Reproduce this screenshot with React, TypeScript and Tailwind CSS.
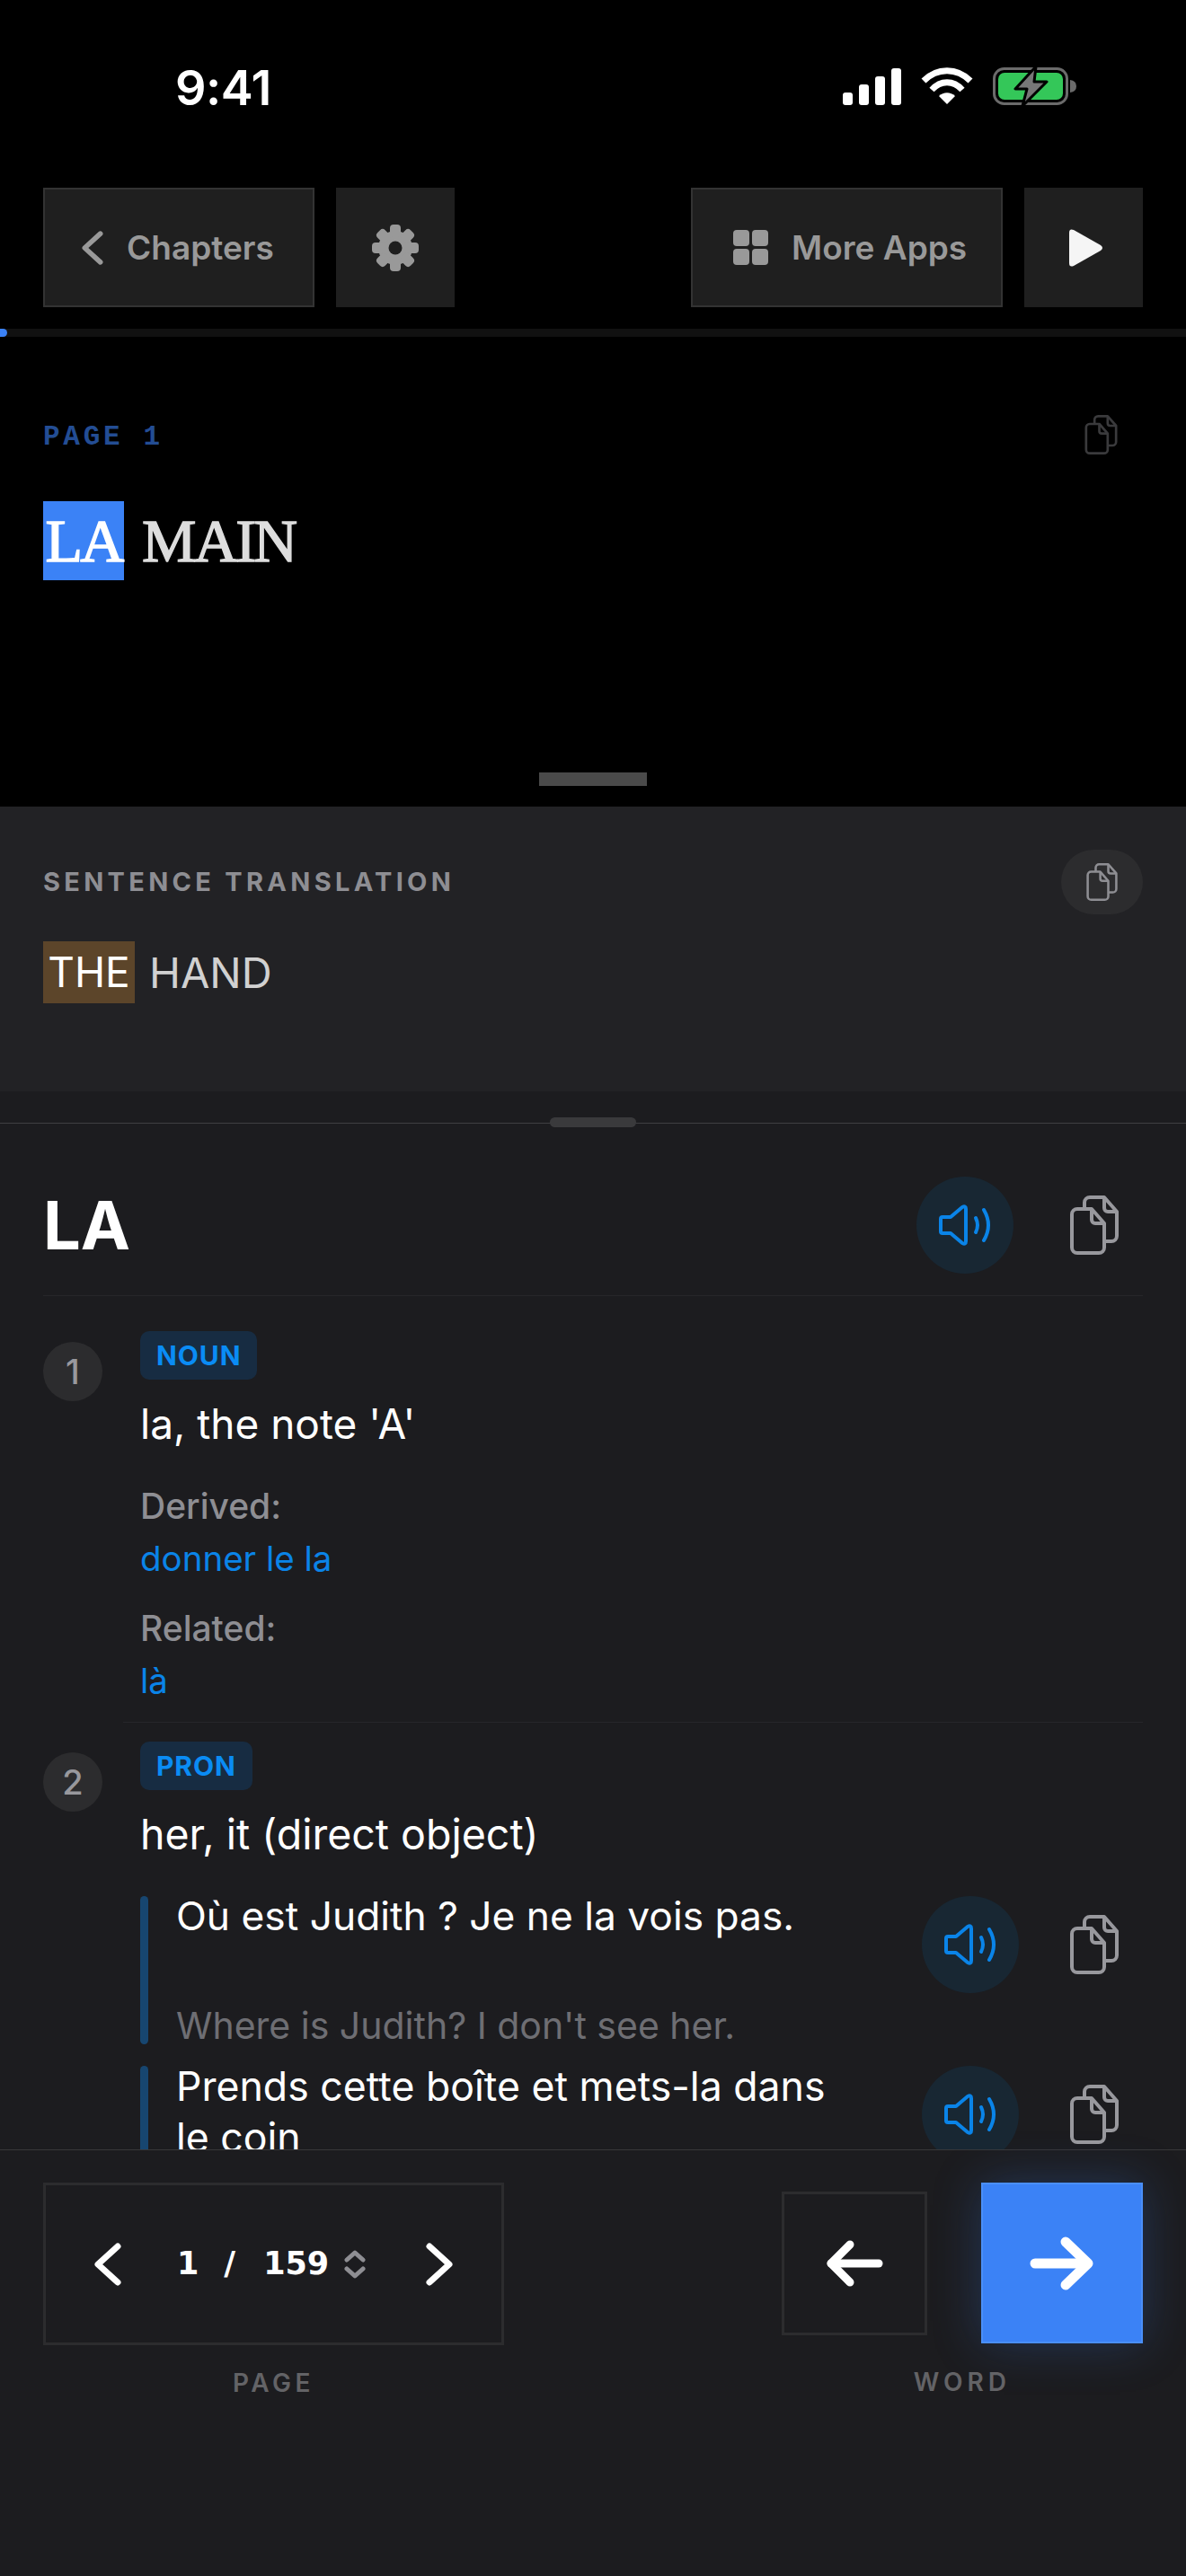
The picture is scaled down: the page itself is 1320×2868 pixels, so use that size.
const blue = "#0a84e8";

const CopyIcon = ({ className }: { className: string }) => (
    <svg viewBox="0 0 54 66" fill="none" stroke="currentColor" strokeWidth="4" strokeLinejoin="round" className={className}>
        <path d="M8 15H24L38 31V58a6 6 0 0 1-6 6H8a6 6 0 0 1-6-6V21a6 6 0 0 1 6-6Z" />
        <path d="M24 15V27a4 4 0 0 0 4 4H38" />
        <path d="M16 15V8a6 6 0 0 1 6-6H38L52 18V45a6 6 0 0 1-6 6H38" />
        <path d="M38 2V14a4 4 0 0 0 4 4H52" />
    </svg>
);

const SpeakerIcon = () => (
    <svg viewBox="0 0 59 46" fill="none" stroke={blue} strokeWidth="4" strokeLinecap="round" strokeLinejoin="round" className="h-[46px] w-[59px]">
        <path d="M4 14H13L26 3Q30 1 30 5V41Q30 45 26 43L13 32H4Q2 32 2 30V16Q2 14 4 14Z" />
        <path d="M41 15Q45 23 41 31" />
        <path d="M50 6Q60 23 50 40" />
    </svg>
);

const GearIcon = () => (
    <svg viewBox="0 0 52 52" className="h-[52px] w-[52px]">
        <circle cx="26" cy="26" r="19" fill="#999" />
        {[0, 45, 90, 135, 180, 225, 270, 315].map((a) => (
            <rect key={a} x="20" y="0" width="12" height="14" rx="4" fill="#999" transform={`rotate(${a} 26 26)`} />
        ))}
        <circle cx="26" cy="26" r="7.5" fill="#1f1f1f" />
    </svg>
);

const AudioButton = () => (
    <div className="flex h-[108px] w-[108px] shrink-0 items-center justify-center rounded-full bg-[#182733]">
        <SpeakerIcon />
    </div>
);

const Chevron = ({ dir, className }: { dir: "left" | "right"; className: string }) => (
    <svg viewBox="0 0 30 48" fill="none" stroke="currentColor" strokeWidth="7" strokeLinecap="round" strokeLinejoin="round" className={className}>
        <path d={dir === "left" ? "M26 4L4 24L26 44" : "M4 4L26 24L4 44"} />
    </svg>
);

const Badge = ({ children }: { children: string }) => (
    <div className="flex h-[54px] w-fit items-center rounded-[10px] bg-[#172c42] px-[18px] text-[30px] font-bold tracking-[0.03em] text-[#0a8cf5]">
        {children}
    </div>
);

const Num = ({ n }: { n: number }) => (
    <div className="mt-[12px] flex h-[66px] w-[66px] shrink-0 items-center justify-center rounded-full bg-[#2c2c2e] text-[38px] font-medium text-[#98989d]">
        {n}
    </div>
);

export default function App() {
    return (
        <div className="flex h-[2868px] w-[1320px] flex-col overflow-hidden bg-[#1c1c1f] font-['Inter','Liberation_Sans',sans-serif]">
            {/* top section */}
            <div className="bg-black">
                {/* status bar */}
                <div className="flex h-[209px] items-start justify-between pt-[66px] pl-[195px] pr-[122px]">
                    <div className="text-[54px] leading-[64px] font-semibold tracking-[-0.01em] text-white">9:41</div>
                    <div className="flex items-center gap-[22px] pt-[8px]">
                        <svg viewBox="0 0 65 41" fill="white" className="h-[41px] w-[65px]">
                            <rect x="0" y="27" width="11" height="14" rx="3" />
                            <rect x="18" y="18" width="11" height="23" rx="3" />
                            <rect x="36" y="9" width="11" height="32" rx="3" />
                            <rect x="54" y="0" width="11" height="41" rx="3" />
                        </svg>
                        <svg viewBox="0 0 58 42" fill="none" stroke="white" strokeWidth="7" className="h-[42px] w-[58px]">
                            <path d="M3 15C18 0 40 0 55 15" />
                            <path d="M12 25C22 14 36 14 46 25" />
                            <path d="M29 41L20 32C25 27 33 27 38 32Z" fill="white" stroke="none" />
                        </svg>
                        <svg viewBox="0 0 93 44" className="h-[44px] w-[93px]">
                            <rect x="1.5" y="2.5" width="81" height="39" rx="11" fill="none" stroke="#6b6b6b" strokeWidth="3" />
                            <rect x="6" y="7" width="72" height="30" rx="7" fill="#34c759" />
                            <path d="M86 15q7 1 7 7t-7 7Z" fill="#6b6b6b" />
                            <path d="M48 0L25 25H38L33 44L60 17H46Z" fill="#777" stroke="#000" strokeWidth="3" strokeLinejoin="round" />
                        </svg>
                    </div>
                </div>
                {/* toolbar */}
                <div className="flex h-[133px] items-stretch justify-between px-12">
                    <div className="flex gap-6">
                        <div className="flex w-[302px] items-center gap-[26px] border-2 border-[#333] bg-[#1f1f1f] pl-[41px] text-[37px] font-semibold text-[#999]">
                            <Chevron dir="left" className="h-[38px] w-[24px]" />
                            Chapters
                        </div>
                        <div className="flex w-[132px] items-center justify-center bg-[#1f1f1f]">
                            <GearIcon />
                        </div>
                    </div>
                    <div className="flex gap-6">
                        <div className="flex w-[347px] items-center gap-[26px] border-2 border-[#333] bg-[#1f1f1f] pl-[45px] text-[37px] font-semibold text-[#999]">
                            <div className="grid h-[39px] w-[39px] shrink-0 grid-cols-2 gap-[3px]">
                                <div className="rounded-[4px] bg-[#999]" />
                                <div className="rounded-[4px] bg-[#999]" />
                                <div className="rounded-[4px] bg-[#999]" />
                                <div className="rounded-[4px] bg-[#999]" />
                            </div>
                            More Apps
                        </div>
                        <div className="flex w-[132px] items-center justify-center bg-[#1f1f1f]">
                            <svg viewBox="0 0 38 42" fill="#f5f5f5" className="ml-[6px] h-[42px] w-[38px]">
                                <path d="M0 4Q0 -1 5 1L35 18Q39 21 35 24L5 41Q0 43 0 38Z" />
                            </svg>
                        </div>
                    </div>
                </div>
                {/* progress */}
                <div className="mt-6 h-[9px] bg-[#111]">
                    <div className="h-full w-[8px] rounded-r-full bg-[#3b82f6]" />
                </div>
                {/* page text */}
                <div className="h-[523px] px-12 pt-[87px]">
                    <div className="flex h-[44px] items-center justify-between">
                        <div className="mt-[6px] font-['Liberation_Mono',monospace] text-[31px] font-bold tracking-[0.12em] whitespace-pre text-[#234d94]">PAGE 1</div>
                        <CopyIcon className="mr-[27px] h-[44px] w-[39px] text-[#3a3a3c]" />
                    </div>
                    <div className="mt-[52px] flex items-center gap-[20px] font-['Liberation_Serif',serif] text-[68px] leading-[88px] tracking-[-0.04em] [-webkit-text-stroke:1.4px_currentColor]">
                        <span className="flex h-[88px] w-[90px] items-center justify-center bg-[#3b82f6] text-white">LA</span>
                        <span className="text-[#ddd]">MAIN</span>
                    </div>
                    <div className="mx-auto mt-[214px] h-[15px] w-[120px] bg-[#4a4a4a]" />
                </div>
            </div>

            {/* sentence translation */}
            <div className="h-[317px] bg-[#222225] px-12 pt-[48px]">
                <div className="flex items-center justify-between">
                    <div className="text-[29px] font-bold tracking-[0.148em] text-[#8e8e93]">SENTENCE TRANSLATION</div>
                    <div className="flex h-[72px] w-[91px] items-center justify-center rounded-full bg-[#2c2c2e]">
                        <CopyIcon className="h-[42px] w-[35px] text-[#8e8e93]" />
                    </div>
                </div>
                <div className="mt-[30px] flex items-center gap-[16px] text-[47px] leading-[69px]">
                    <span className="flex h-[69px] w-[102px] items-center justify-center bg-[#5c452a] text-[46px] text-white">THE</span>
                    <span className="text-[#d1d1d1]">HAND</span>
                </div>
            </div>

            {/* dictionary */}
            <div className="relative min-h-0 flex-1 overflow-hidden pt-[35px]">
                <div className="absolute top-[29px] left-[612px] h-[11px] w-[96px] rounded-full bg-[#3a3a3c]" />
                <div className="border-t border-[#3f3f42] px-12">
                    <div className="flex items-start justify-between border-b border-[#26262a] pt-[59px] pb-[24px]">
                        <div className="text-[74px] leading-[108px] font-bold text-white">LA</div>
                        <div className="flex h-[108px] items-center gap-[63px] pr-[27px]">
                            <AudioButton />
                            <CopyIcon className="h-[66px] w-[54px] text-[#98989d]" />
                        </div>
                    </div>

                    <div className="mt-[39px] flex gap-[42px]">
                        <Num n={1} />
                        <div>
                            <Badge>NOUN</Badge>
                            <div className="mt-[20px] text-[46px] leading-[58px] text-white">la, the note 'A'</div>
                            <div className="mt-[34px] text-[39px] leading-[58px] font-medium text-[#8e8e93]">Derived:</div>
                            <div className="text-[38.5px] leading-[58px]" style={{ color: blue }}>donner le la</div>
                            <div className="mt-[20px] text-[39px] leading-[58px] font-medium text-[#8e8e93]">Related:</div>
                            <div className="text-[38.5px] leading-[58px]" style={{ color: blue }}>là</div>
                        </div>
                    </div>
                    <div className="mt-[17px] ml-[89px] h-px bg-[#26262a]" />

                    <div className="mt-[21px] flex gap-[42px]">
                        <Num n={2} />
                        <div className="flex-1">
                            <Badge>PRON</Badge>
                            <div className="mt-[20px] text-[46.5px] leading-[58px] text-white">her, it (direct object)</div>
                            <div className="mt-[40px] flex h-[165px]">
                                <div className="h-full w-[9px] shrink-0 rounded-full bg-[#174670]" />
                                <div className="-mt-[6px] ml-[31px] w-[750px] shrink-0">
                                    <div className="text-[44.3px] leading-[57px] text-white">Où est Judith ? Je ne la vois pas.</div>
                                    <div className="mt-[64px] text-[41px] leading-[58px] text-[#6e6e73]">Where is Judith? I don't see her.</div>
                                </div>
                                <div className="ml-[80px] flex h-[108px] items-center gap-[57px]">
                                    <AudioButton />
                                    <CopyIcon className="h-[66px] w-[54px] text-[#98989d]" />
                                </div>
                            </div>
                            <div className="mt-[24px] flex h-[165px]">
                                <div className="h-full w-[9px] shrink-0 rounded-full bg-[#174670]" />
                                <div className="-mt-[5px] ml-[31px] w-[750px] shrink-0 text-[44.6px] leading-[57px] text-white">
                                    Prends cette boîte et mets-la dans le coin
                                </div>
                                <div className="ml-[80px] flex h-[108px] items-center gap-[57px]">
                                    <AudioButton />
                                    <CopyIcon className="h-[66px] w-[54px] text-[#98989d]" />
                                </div>
                            </div>
                        </div>
                    </div>
                </div>
            </div>

            {/* footer */}
            <div className="flex h-[475px] items-start justify-between border-t border-[#38383a] bg-[#1c1c1f] px-12 pt-[36px]">
                <div className="flex w-[513px] flex-col items-center">
                    <div className="flex h-[181px] w-full items-center border-[3px] border-[#2c2c2e] pl-[54px] text-white">
                        <Chevron dir="left" className="h-[48px] w-[30px]" />
                        <div className="ml-[62px] flex items-center font-['DejaVu_Sans',sans-serif] text-[35px] font-bold">
                            <span>1</span>
                            <span className="ml-[28px]">/</span>
                            <span className="ml-[31px]">159</span>
                        </div>
                        <svg viewBox="0 0 24 32" fill="none" stroke="#8e8e93" strokeWidth="5" strokeLinecap="round" strokeLinejoin="round" className="ml-[17px] h-[32px] w-[24px]">
                            <path d="M3 11L12 3L21 11" />
                            <path d="M3 21L12 29L21 21" />
                        </svg>
                        <Chevron dir="right" className="ml-[67px] h-[48px] w-[30px]" />
                    </div>
                    <div className="mt-[21px] text-[28px] font-semibold tracking-[0.16em] text-[#636366]">PAGE</div>
                </div>
                <div className="flex w-[402px] flex-col items-center">
                    <div className="flex w-full items-center justify-between">
                        <div className="flex h-[160px] w-[162px] items-center justify-center border-[3px] border-[#2c2c2e]">
                            <svg viewBox="0 0 64 52" fill="none" stroke="white" strokeWidth="9" strokeLinecap="round" strokeLinejoin="round" className="h-[52px] w-[64px]">
                                <path d="M59 26H6" />
                                <path d="M27 5L6 26L27 47" />
                            </svg>
                        </div>
                        <div className="flex h-[179px] w-[180px] items-center justify-center border-2 border-[#4a8ff8] bg-[#3b82f6] shadow-[0_0_50px_rgba(59,130,246,0.25)]">
                            <svg viewBox="0 0 72 60" fill="none" stroke="white" strokeWidth="11" strokeLinecap="round" strokeLinejoin="round" className="h-[60px] w-[72px]">
                                <path d="M6 30H64" />
                                <path d="M40 6L65 30L40 54" />
                            </svg>
                        </div>
                    </div>
                    <div className="mt-[22px] text-[28px] font-semibold tracking-[0.18em] text-[#636366]">WORD</div>
                </div>
            </div>
        </div>
    );
}
